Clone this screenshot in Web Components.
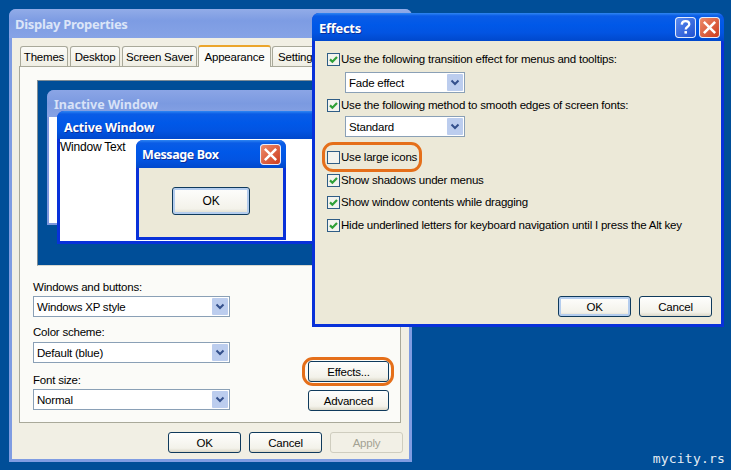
<!DOCTYPE html>
<html>
<head>
<meta charset="utf-8">
<title>Display Properties</title>
<style>
    html, body { margin: 0; padding: 0; }
    body { font-family: "Liberation Sans", sans-serif; font-size: 11.5px; letter-spacing: -0.21px; color: #000; }
</style>
</head>
<body>
<xp-desktop>
    <xp-window title="Display Properties" state="faded" style="--x:9px;--y:9px;--w:403px;--h:453px;--bar:29px;--edge:3px;--title-track:-0.3px;--bar-left:6px">
        <display-page></display-page>
    </xp-window>

    <xp-window title="Effects" style="--x:312px;--y:13px;--w:412px;--h:314px;--bar:28px;--edge:3px;--title-track:-0.3px">
        <span slot="controls" style="display:flex;gap:3px">
            <xp-cap kind="help"></xp-cap>
            <xp-cap kind="close"></xp-cap>
        </span>
        <effects-page></effects-page>
    </xp-window>

    <span slot="mark">mycity.rs</span>
</xp-desktop>

<script>
class XpDesktop extends HTMLElement {
    constructor() {
        super();
        this.attachShadow({mode:'open'});
        this.shadowRoot.innerHTML = `
            <style>
                :host {
                    display: block;
                    position: relative;
                    width: 731px;
                    height: 470px;
                    overflow: hidden;
                    background: #004e98;
                }
                #mark {
                    position: absolute;
                    right: 6px;
                    bottom: 4px;
                    font: 13px "DejaVu Sans Mono", monospace;
                    letter-spacing: 0.2px;
                    color: #e4ecf4;
                }
            </style>
            <slot></slot>
            <div id="mark"><slot name="mark"></slot></div>
        `;
    }
}

// windows sit on a free canvas, so they get coordinates through custom properties
class XpWindow extends HTMLElement {
    constructor() {
        super();
        this.attachShadow({mode:'open'});
        this.shadowRoot.innerHTML = `
            <style>
                :host {
                    position: absolute;
                    left: var(--x);
                    top: var(--y);
                    width: var(--w);
                    height: var(--h);
                    box-sizing: border-box;
                    display: flex;
                    flex-direction: column;
                    background: #0831d9;
                    border-radius: 7px 7px 0 0;
                    overflow: hidden;
                    --body: #ece9d8;
                }
                :host([state="faded"]) {
                    background: #7f9ce2;
                    --body: #f1efe4;
                }
                :host([state="dim"]) {
                    background: #7d97de;
                    --body: #fff;
                }
                :host([paper]) {
                    --body: #fff;
                }
                #bar {
                    flex: none;
                    height: var(--bar);
                    box-sizing: border-box;
                    display: flex;
                    align-items: center;
                    justify-content: space-between;
                    padding: var(--bar-drop, 1px) 4px 0 var(--bar-left, 7px);
                    background: linear-gradient(#2f86f2 0, #0a5ce6 3px, #0058e8 12px, #0254e2 70%, #0048cc 100%);
                    color: #fff;
                    font: bold var(--title-size, 13px) "Noto Sans", "Liberation Sans", sans-serif;
                    letter-spacing: var(--title-track, 0);
                    text-shadow: 1px 1px 0 #0b2f9a;
                    white-space: nowrap;
                }
                :host([state="faded"]) #bar {
                    background: linear-gradient(#92ace8, #7d9ce3 40%, #86a3e6);
                    color: #dbe5f8;
                    text-shadow: none;
                }
                :host([state="dim"]) #bar {
                    background: linear-gradient(#8ba5e6, #7b9ae0 50%, #87a2e4);
                    color: #d8e2f7;
                    text-shadow: none;
                }
                #body {
                    flex: 1;
                    min-height: 0;
                    margin: 0 var(--edge) var(--edge);
                    background: var(--body);
                    position: relative;
                }
            </style>
            <div id="bar">
                <span id="title"></span>
                <slot name="controls"></slot>
            </div>
            <div id="body"><slot></slot></div>
        `;
    }

    connectedCallback() {
        this.shadowRoot.querySelector('#title').textContent = this.getAttribute('title');
    }
}

class XpCap extends HTMLElement {
    constructor() {
        super();
        this.attachShadow({mode:'open'});
    }

    connectedCallback() {
        const kind = this.getAttribute('kind');
        let fill = 'url(#b)';
        let mark = '<rect x="4" y="13" width="6" height="3" fill="#fff"/>';
        if(kind === 'close') {
            fill = 'url(#r)';
            mark = '<path d="M5.5 5.5L14.5 14.5M14.5 5.5L5.5 14.5" stroke="#fff" stroke-width="2.4" stroke-linecap="square"/>';
        }
        if(kind === 'help') {
            mark = '<path d="M6.4 7.2C6.6 5 8.2 4 10.1 4C12.2 4 13.6 5.2 13.6 7C13.6 9.3 10.2 9.4 10.2 12" fill="none" stroke="#fff" stroke-width="2.2"/><rect x="9" y="13.4" width="2.4" height="2.4" fill="#fff"/>';
        }
        this.shadowRoot.innerHTML = `
            <style>
                :host { display: block; width: 21px; height: 21px; }
                svg { display: block; }
            </style>
            <svg width="21" height="21" viewBox="0 0 20 20">
                <defs>
                    <linearGradient id="b" x1="0" y1="0" x2="1" y2="1">
                        <stop offset="0" stop-color="#5b8cf0"/><stop offset="1" stop-color="#1f4fd0"/>
                    </linearGradient>
                    <linearGradient id="r" x1="0" y1="0" x2="1" y2="1">
                        <stop offset="0" stop-color="#ee8d6c"/><stop offset="1" stop-color="#cc3a1c"/>
                    </linearGradient>
                </defs>
                <rect x="0.5" y="0.5" width="19" height="19" rx="3" fill="${fill}" stroke="#e4ecfb"/>
                ${mark}
            </svg>
        `;
    }
}

class XpTab extends HTMLElement {
    constructor() {
        super();
        this.attachShadow({mode:'open'});
        this.shadowRoot.innerHTML = `
            <style>
                :host {
                    display: flex;
                    align-items: center;
                    justify-content: center;
                    box-sizing: border-box;
                    height: 20px;
                    margin-top: 1px;
                    margin-right: 2px;
                    border: 1px solid #a9a99a;
                    border-bottom: 0;
                    border-radius: 3px 3px 0 0;
                    background: linear-gradient(#fbfbf7, #efeee4);
                    white-space: nowrap;
                }
                :host([active]) {
                    height: 22px;
                    margin-top: 0;
                    margin-bottom: -1px;
                    margin-right: 1px;
                    margin-left: -1px;
                    border-top: 2px solid #eba52c;
                    background: #fbfbf8;
                    position: relative;
                    z-index: 1;
                }
            </style>
            <slot></slot>
        `;
    }
}

class XpCombo extends HTMLElement {
    constructor() {
        super();
        this.attachShadow({mode:'open'});
        this.shadowRoot.innerHTML = `
            <style>
                :host {
                    display: flex;
                    align-items: center;
                    box-sizing: border-box;
                    height: 21px;
                    padding: 1px 1px 1px 3px;
                    background: #fff;
                    border: 1px solid #8aa0b6;
                    white-space: nowrap;
                }
                #text { flex: 1; }
                svg { flex: none; display: block; }
            </style>
            <span id="text"><slot></slot></span>
            <svg width="16" height="17" viewBox="0 0 16 17">
                <rect width="16" height="17" rx="1" fill="#bccdee"/>
                <path d="M4.5 6.5L8 10L11.5 6.5" fill="none" stroke="#34508c" stroke-width="2"/>
            </svg>
        `;
    }
}

class XpCheck extends HTMLElement {
    constructor() {
        super();
        this.attachShadow({mode:'open'});
        this.shadowRoot.innerHTML = `
            <style>
                :host {
                    display: flex;
                    align-items: center;
                    gap: 1px;
                    height: 14px;
                    white-space: nowrap;
                    position: relative;
                }
                svg { flex: none; display: block; }
                #tick { display: none; }
                :host([checked]) #tick { display: block; }
            </style>
            <svg width="13" height="13" viewBox="0 0 13 13">
                <rect x="0.5" y="0.5" width="12" height="12" fill="#f3f3ee" stroke="#2f5d86"/>
                <path id="tick" d="M3 6.4L5.4 8.8L10 4" fill="none" stroke="#2fa038" stroke-width="2.2"/>
            </svg>
            <span><slot></slot></span>
            <slot name="over"></slot>
        `;
    }
}

class XpButton extends HTMLElement {
    constructor() {
        super();
        this.attachShadow({mode:'open'});
        this.shadowRoot.innerHTML = `
            <style>
                :host {
                    display: flex;
                    align-items: center;
                    justify-content: center;
                    box-sizing: border-box;
                    width: 73px;
                    height: 21px;
                    border: 1px solid #0f3a5c;
                    border-radius: 3px;
                    background: linear-gradient(#fefefd, #f3f2ea 80%, #dcd8c8);
                    position: relative;
                    white-space: nowrap;
                }
                :host([default]) {
                    box-shadow: inset 0 0 0 2px #b4cdee;
                }
                :host([disabled]) {
                    border-color: #cfcdbf;
                    background: #f2f0e6;
                    color: #a3a294;
                }
            </style>
            <slot></slot>
            <slot name="over"></slot>
        `;
    }
}

// the orange marker drawn over a control
class XpRing extends HTMLElement {
    constructor() {
        super();
        this.attachShadow({mode:'open'});
        this.shadowRoot.innerHTML = `
            <style>
                :host {
                    position: absolute;
                    left: var(--l);
                    top: var(--t);
                    right: var(--r);
                    bottom: var(--b);
                    border: 3px solid #e56f1a;
                    border-radius: 11px;
                    pointer-events: none;
                }
            </style>
        `;
    }
}

class DisplayPreview extends HTMLElement {
    constructor() {
        super();
        this.attachShadow({mode:'open'});
        this.shadowRoot.innerHTML = `
            <style>
                :host {
                    display: block;
                    position: relative;
                    height: 186px;
                    margin-left: 4px;
                    box-sizing: border-box;
                    overflow: hidden;
                    background: #004e98;
                    border: 1px solid #7f8d96;
                    border-right: 0;
                    border-bottom-color: #d8d8d0;
                    --bar-left: 7px;
                }
                #text { padding: 1px 0 0; font-size: 12px; line-height: 14px; }
                #message {
                    height: 100%;
                    display: flex;
                    align-items: center;
                    justify-content: center;
                    padding-bottom: 3px;
                    box-sizing: border-box;
                }
                xp-button { width: 78px; height: 28px; font-size: 12px; }
                xp-window { --title-size: 12.5px; --title-track: 0; }
            </style>
            <xp-window title="Inactive Window" state="dim" style="--x:9px;--y:9px;--w:300px;--h:135px;--bar:27px;--edge:2px">
                <span slot="controls" style="display:flex;gap:3px;margin-right:-17px">
                    <xp-cap kind="min"></xp-cap>
                    <xp-cap kind="min"></xp-cap>
                </span>
            </xp-window>
            <xp-window title="Active Window" paper style="--x:19px;--y:30px;--w:290px;--h:133px;--bar:28px;--edge:3px;--bar-drop:5px;--title-track:-0.15px">
                <span slot="controls" style="display:flex;margin-right:-20px">
                    <xp-cap kind="min"></xp-cap>
                </span>
                <div id="text">Window Text</div>
            </xp-window>
            <xp-window title="Message Box" style="--x:98px;--y:59px;--w:150px;--h:100px;--bar:28px;--edge:3px;--title-track:-0.4px;--bar-left:6px">
                <xp-cap slot="controls" kind="close" style="margin-right:1px"></xp-cap>
                <div id="message"><xp-button default>OK</xp-button></div>
            </xp-window>
        `;
    }
}

class DisplayPage extends HTMLElement {
    constructor() {
        super();
        this.attachShadow({mode:'open'});
        this.shadowRoot.innerHTML = `
            <style>
                :host {
                    display: flex;
                    flex-direction: column;
                    height: 100%;
                    padding: 7px 7px 0 7px;
                    box-sizing: border-box;
                    overflow: hidden;
                }
                #tabs { display: flex; flex: none; padding-left: 1px; height: 21px; }
                #panel {
                    flex: none;
                    height: 357px;
                    width: 382px;
                    box-sizing: border-box;
                    background: #fbfbf8;
                    border: 1px solid #a9a99a;
                    padding: 13px 11px 0 13px;
                }
                #form {
                    display: flex;
                    justify-content: space-between;
                    margin-top: 14px;
                }
                #fields { width: 197px; display: flex; flex-direction: column; }
                .label { height: 16px; line-height: 15px; }
                xp-combo + .label { margin-top: 7px; height: 18px; line-height: 16px; }
                #side {
                    display: flex;
                    flex-direction: column;
                    gap: 8px;
                    padding-top: 81px;
                }
                #side xp-button { width: 81px; }
                #actions {
                    display: flex;
                    justify-content: flex-end;
                    gap: 8px;
                    padding: 9px 0 0;
                    margin-right: -1px;
                }
            </style>
            <div id="tabs">
                <xp-tab style="width:48px">Themes</xp-tab>
                <xp-tab style="width:50px">Desktop</xp-tab>
                <xp-tab style="width:75px">Screen Saver</xp-tab>
                <xp-tab style="width:73px" active>Appearance</xp-tab>
                <xp-tab style="width:52px">Settings</xp-tab>
            </div>
            <div id="panel">
                <display-preview></display-preview>
                <div id="form">
                    <div id="fields">
                        <div class="label">Windows and buttons:</div>
                        <xp-combo>Windows XP style</xp-combo>
                        <div class="label">Color scheme:</div>
                        <xp-combo>Default (blue)</xp-combo>
                        <div class="label" style="margin-top:8px;line-height:18px">Font size:</div>
                        <xp-combo>Normal</xp-combo>
                    </div>
                    <div id="side">
                        <xp-button>Effects...<xp-ring slot="over" style="--l:-7px;--t:-5px;--r:-6px;--b:-5px"></xp-ring></xp-button>
                        <xp-button>Advanced</xp-button>
                    </div>
                </div>
            </div>
            <div id="actions">
                <xp-button>OK</xp-button>
                <xp-button>Cancel</xp-button>
                <xp-button disabled>Apply</xp-button>
            </div>
        `;
    }
}

class EffectsPage extends HTMLElement {
    constructor() {
        super();
        this.attachShadow({mode:'open'});
        this.shadowRoot.innerHTML = `
            <style>
                :host {
                    display: flex;
                    flex-direction: column;
                    height: 100%;
                    box-sizing: border-box;
                    padding: 11px 9px 7px 12px;
                }
                #list { flex: 1; display: flex; flex-direction: column; }
                xp-combo { width: 120px; margin-left: 18px; }
                .first { margin-bottom: 6px; }
                .second { margin-top: 5px; }
                #actions { display: flex; justify-content: flex-end; gap: 8px; }
            </style>
            <div id="list">
                <xp-check class="first" checked>Use the following transition effect for menus and tooltips:</xp-check>
                <xp-combo>Fade effect</xp-combo>
                <xp-check class="second" style="margin-bottom:4px" checked>Use the following method to smooth edges of screen fonts:</xp-check>
                <xp-combo>Standard</xp-combo>
                <xp-check style="margin-top:13px">Use large icons<xp-ring slot="over" style="--l:-5px;--t:-8px;--r:auto;--b:-8px;width:94px"></xp-ring></xp-check>
                <xp-check style="margin-top:9px" checked>Show shadows under menus</xp-check>
                <xp-check style="margin-top:8px" checked>Show window contents while dragging</xp-check>
                <xp-check style="margin-top:9px" checked>Hide underlined letters for keyboard navigation until I press the Alt key</xp-check>
            </div>
            <div id="actions">
                <xp-button default>OK</xp-button>
                <xp-button>Cancel</xp-button>
            </div>
        `;
    }
}

customElements.define('xp-desktop', XpDesktop);
customElements.define('xp-window', XpWindow);
customElements.define('xp-cap', XpCap);
customElements.define('xp-tab', XpTab);
customElements.define('xp-combo', XpCombo);
customElements.define('xp-check', XpCheck);
customElements.define('xp-button', XpButton);
customElements.define('xp-ring', XpRing);
customElements.define('display-preview', DisplayPreview);
customElements.define('display-page', DisplayPage);
customElements.define('effects-page', EffectsPage);
</script>
</body>
</html>
